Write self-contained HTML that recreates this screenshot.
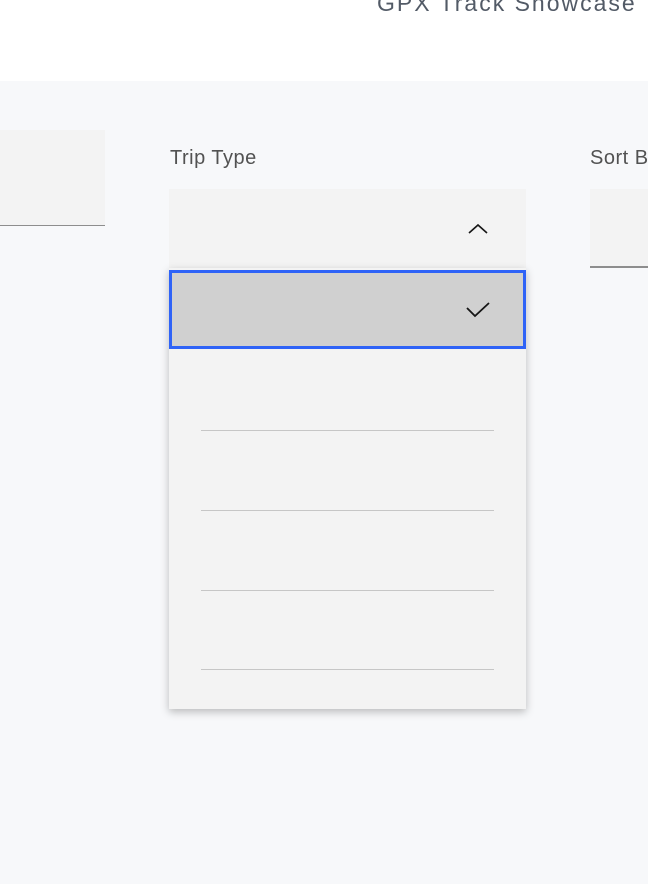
<!DOCTYPE html>
<html><head><style>
body{margin:0;width:648px;height:884px;overflow:hidden;background:#f7f8fa;font-family:"Liberation Sans",sans-serif;position:relative}
.hdr{position:absolute;left:0;top:0;width:648px;height:81px;background:#fff}
.title{position:absolute;left:377px;top:-10px;font-size:23px;letter-spacing:2px;color:#525a66;white-space:nowrap}
.lbl{position:absolute;font-size:20px;letter-spacing:0.5px;color:#525252;top:147px;white-space:nowrap}
.box{position:absolute;background:#f3f3f3}
.menu{position:absolute;left:169px;top:268px;width:357px;height:441px;background:#f3f3f3;box-shadow:0 3px 8px rgba(0,0,0,.25)}
.sel{position:absolute;left:0;top:2px;width:357px;height:79px;box-sizing:border-box;border:3px solid #2f63f7;background:#d0d0d0}
.div{position:absolute;left:32px;width:293px;height:1px;background:#c6c6c6}
</style></head><body>
<div class="hdr"><div class="title">GPX Track Showcase</div></div>
<div class="box" style="left:0;top:130px;width:105px;height:95px;border-bottom:1px solid #8d8d8d"></div>
<div class="lbl" style="left:170px">Trip Type</div>
<div class="lbl" style="left:590px">Sort By</div>
<div class="box" style="left:169px;top:189px;width:357px;height:79px">
<svg style="position:absolute;left:299px;top:34px" width="20" height="12"><path d="M1 10 L10 2 L19 10" fill="none" stroke="#161616" stroke-width="1.6"/></svg>
</div>
<div class="box" style="left:590px;top:189px;width:58px;height:77px;border-bottom:2px solid #8d8d8d"></div>
<div class="menu">
<div class="sel"><svg style="position:absolute;left:293px;top:27px" width="26" height="18"><path d="M2 8 L10 16 L24 3" fill="none" stroke="#161616" stroke-width="1.8"/></svg></div>
<div class="div" style="top:162px"></div>
<div class="div" style="top:242px"></div>
<div class="div" style="top:322px"></div>
<div class="div" style="top:401px"></div>
</div>
</body></html>
